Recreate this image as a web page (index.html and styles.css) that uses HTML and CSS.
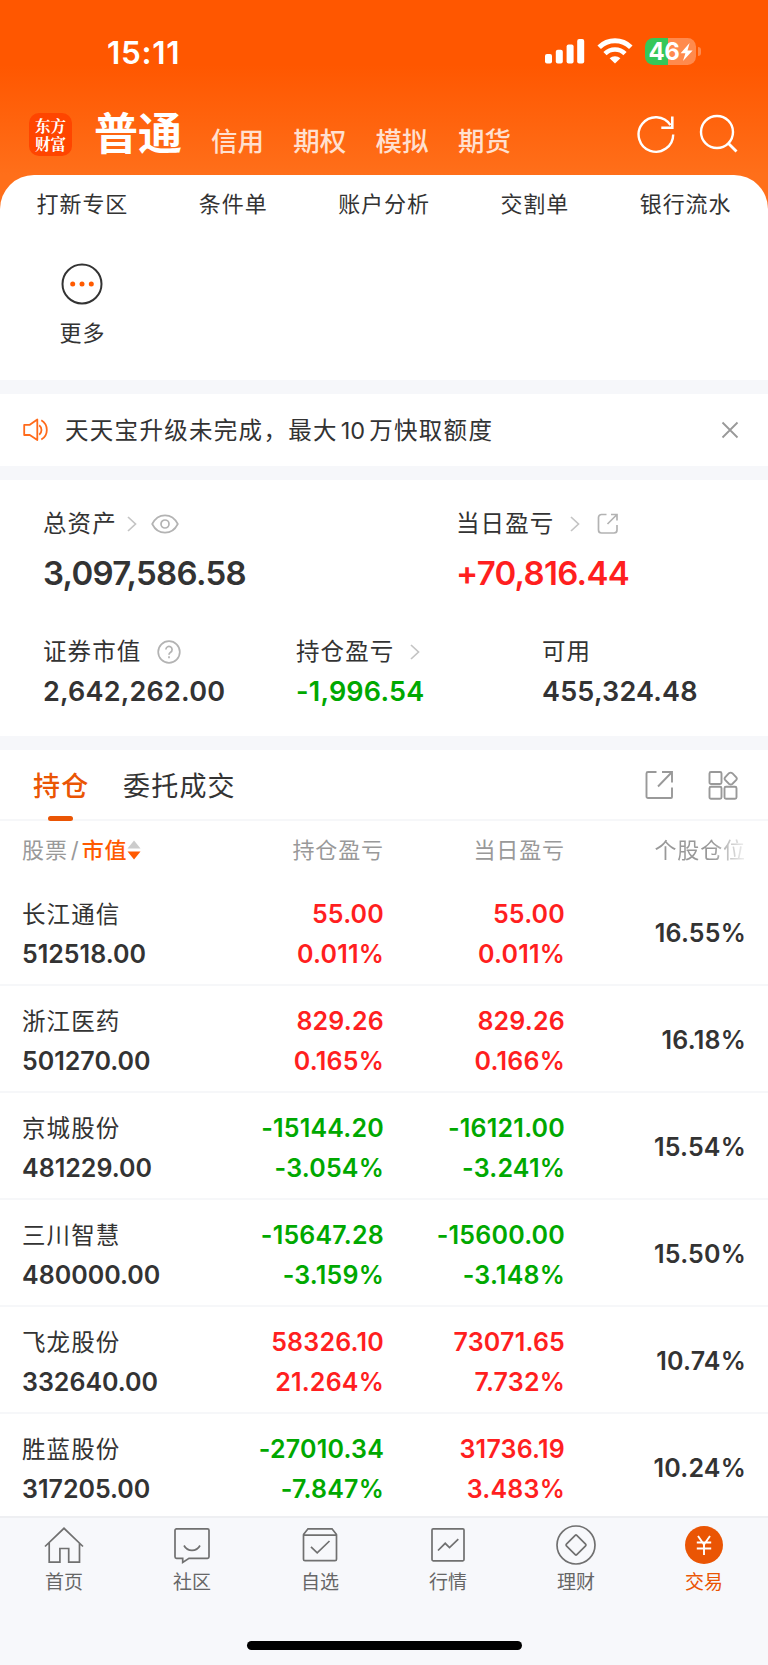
FILE: index.html
```html
<!DOCTYPE html>
<html lang="zh-CN">
<head>
<meta charset="utf-8">
<title>交易</title>
<link rel="stylesheet" href="styles.css">
</head>
<body>
<div class="screen">
  <header class="top">
    <div class="status">
      <span class="time">15:11</span>
      <svg class="signal" width="40" height="25" viewBox="0 0 40 25" fill="#fff"><rect x="0" y="15" width="7" height="9.5" rx="2"/><rect x="10.8" y="10.7" width="7" height="13.8" rx="2"/><rect x="21.6" y="5.6" width="7" height="18.900" rx="2"/><rect x="32.200" y="0" width="7" height="24.500" rx="2"/></svg>
      <svg class="wifi" width="36" height="26" viewBox="0 0 36 26" fill="none" stroke="#fff"><path d="M2.200 9.200a22.500 22.500 0 0 1 31.600 0" stroke-width="5"/><path d="M8 15.600a14.200 14.200 0 0 1 20 0" stroke-width="4.600"/><path d="M12.600 20.300a7.800 7.800 0 0 1 10.800 0L18 25.600z" fill="#fff" stroke="none"/></svg>
      <div class="battery"><span class="level">46</span><svg width="13" height="18" viewBox="0 0 13 18" fill="#fff"><path d="M9.600 0 .6 10.200h4.800L3 18l9.600-10.600H7.500z"/></svg></div>
      <i class="nub"></i>
    </div>
    <div class="nav">
      <div class="logo"><span>东方</span><span>财富</span></div>
      <b class="current">普通</b>
      <span class="alt">信用</span><span class="alt">期权</span><span class="alt">模拟</span><span class="alt">期货</span>
      <svg class="refresh" width="40" height="40" viewBox="0 0 40 40" fill="none" stroke="#fff" stroke-width="2.400"><path d="M37.200 20.500A17.300 17.300 0 1 1 34.500 11.200"/><path d="M36.300 2.500v11.200H25.300" stroke-width="2.600"/></svg>
      <svg class="search" width="40" height="40" viewBox="0 0 40 40" fill="none" stroke="#fff" stroke-width="2.400"><circle cx="18" cy="18" r="16"/><path d="m29 29 8.500 8.500" stroke-width="2.800"/></svg>
    </div>
  </header>

  <section class="shortcuts">
    <span>打新专区</span><span>条件单</span><span>账户分析</span><span>交割单</span><span>银行流水</span>
    <div class="more">
      <svg width="42" height="42" viewBox="0 0 42 42"><circle cx="21" cy="21" r="19.500" fill="none" stroke="#333" stroke-width="2"/><g fill="#ff5a00"><circle cx="11.700" cy="21" r="2.500"/><circle cx="21" cy="21" r="2.500"/><circle cx="30.300" cy="21" r="2.500"/></g></svg>
      <span>更多</span>
    </div>
  </section>

  <section class="notice">
    <svg width="26" height="24" viewBox="0 0 26 24" fill="none" stroke="#ff6a1a" stroke-width="1.800" stroke-linejoin="round"><path d="M1.200 6.800h5.600L14.300 1.500v20.500L6.800 17H1.200z"/><path d="M16.200 7.200a6.200 6.200 0 0 1 0 9.600M18.300 2.200a11.300 11.300 0 0 1 0 19.400"/></svg>
    <p>天天宝升级未完成，最大<em>10</em>万快取额度</p>
    <svg width="18" height="18" viewBox="0 0 18 18" stroke="#999" stroke-width="1.800"><path d="m1.500 1.500 15 15m0-15-15 15"/></svg>
  </section>

  <section class="assets">
    <div class="pair">
      <div class="stat">
        <div class="label">总资产<svg class="chev" width="10" height="16" viewBox="0 0 10 16"><path d="m1 1 7.500 7L1 15"/></svg><svg class="eye" width="28" height="20" viewBox="0 0 28 20"><path d="M1.200 10C7-1.600 21-1.600 26.800 10 21 21.600 7 21.600 1.200 10z"/><circle cx="14" cy="10" r="4"/></svg></div>
        <div class="num big">3,097,586.58</div>
      </div>
      <div class="stat">
        <div class="label">当日盈亏<svg class="chev wide" width="10" height="16" viewBox="0 0 10 16"><path d="m1 1 7.500 7L1 15"/></svg><svg class="out" width="22" height="22" viewBox="0 0 22 22"><path d="M9.500 1.500h-5a3 3 0 0 0-3 3V17a3 3 0 0 0 3 3H17a3 3 0 0 0 3-3v-5M14 1.500h6v6M20 1.500l-9.500 9.500"/></svg></div>
        <div class="num big up">+70,816.44</div>
      </div>
    </div>
    <div class="trio">
      <div class="stat">
        <div class="label">证券市值<svg class="help" width="24" height="24" viewBox="0 0 24 24"><circle cx="12" cy="12" r="10.800"/><path d="M8.900 9.600a3.100 3.100 0 1 1 4.700 2.600c-1.100.7-1.600 1.300-1.600 2.600M12 16.300v1.900"/></svg></div>
        <div class="num mid">2,642,262.00</div>
      </div>
      <div class="stat">
        <div class="label">持仓盈亏<svg class="chev wide" width="10" height="16" viewBox="0 0 10 16"><path d="m1 1 7.500 7L1 15"/></svg></div>
        <div class="num mid down">-1,996.54</div>
      </div>
      <div class="stat">
        <div class="label">可用</div>
        <div class="num mid">455,324.48</div>
      </div>
    </div>
  </section>

  <section class="holdings">
    <div class="tabs">
      <span class="tab on">持仓</span><span class="tab">委托成交</span>
      <svg class="share" width="30" height="30" viewBox="0 0 30 30" fill="none" stroke="#999" stroke-width="1.900"><path d="M12.500 2H4a1.500 1.500 0 0 0-1.500 1.500v23A1.500 1.500 0 0 0 4 28h23a1 1 0 0 0 1-1v-9.500M18 2h10v10.500M28 2 14 16.500"/></svg>
      <svg class="apps" width="30" height="30" viewBox="0 0 30 30" fill="none" stroke="#999" stroke-width="1.900"><rect x="1.500" y="2" width="12" height="12" rx="1.500"/><rect x="1.500" y="16.800" width="12" height="12" rx="1.500"/><rect x="16.500" y="16.800" width="12" height="12" rx="1.500"/><path d="m21 3.200 -3.900 4.200q-1 1.200 0 2.400l4 4.200q1.700 1 3.200 0l4-4.200q1-1.200 0-2.400l-4-4.200q-1.600-1.200-3.300 0z"/></svg>
    </div>
    <div class="row head">
      <span class="first">股票<i>/</i><em>市值</em><svg width="14" height="20" viewBox="0 0 14 20"><path d="M7 .5 13.500 8.500H.5z" fill="#ccc"/><path d="M7 19.500 13.500 11.500H.5z" fill="#ff5a00"/></svg></span>
      <span>持仓盈亏</span><span>当日盈亏</span><span class="fade">个股仓位</span>
    </div>
    <div class="row"><div class="name">长江通信<b>512518.00</b></div><div class="up">55.00<b>0.011%</b></div><div class="up">55.00<b>0.011%</b></div><div class="pct">16.55%</div></div>
    <div class="row"><div class="name">浙江医药<b>501270.00</b></div><div class="up">829.26<b>0.165%</b></div><div class="up">829.26<b>0.166%</b></div><div class="pct">16.18%</div></div>
    <div class="row"><div class="name">京城股份<b>481229.00</b></div><div class="down">-15144.20<b>-3.054%</b></div><div class="down">-16121.00<b>-3.241%</b></div><div class="pct">15.54%</div></div>
    <div class="row"><div class="name">三川智慧<b>480000.00</b></div><div class="down">-15647.28<b>-3.159%</b></div><div class="down">-15600.00<b>-3.148%</b></div><div class="pct">15.50%</div></div>
    <div class="row"><div class="name">飞龙股份<b>332640.00</b></div><div class="up">58326.10<b>21.264%</b></div><div class="up">73071.65<b>7.732%</b></div><div class="pct">10.74%</div></div>
    <div class="row"><div class="name">胜蓝股份<b>317205.00</b></div><div class="down">-27010.34<b>-7.847%</b></div><div class="up">31736.19<b>3.483%</b></div><div class="pct">10.24%</div></div>
  </section>

  <footer class="bar">
    <nav>
      <a><svg width="42" height="42" viewBox="0 0 42 42"><path d="M2 22.500 21 4.300l19 18.200M6.200 19v19.200h10.700V24.500h8.800v13.700h10.800V19"/></svg>首页</a>
      <a><svg width="42" height="42" viewBox="0 0 42 42"><path d="M5.500 4.800h31A1.500 1.500 0 0 1 38 6.300v26.500a1.500 1.500 0 0 1-1.500 1.500H18l-6.300 4.200v-4.200H5.500A1.500 1.500 0 0 1 4 32.800V6.300a1.500 1.500 0 0 1 1.500-1.500zM13 21.500c3.500 6.500 12.500 6.500 16 0"/></svg>社区</a>
      <a><svg width="42" height="42" viewBox="0 0 42 42"><path d="M4.500 10.500 9 4.800h24l4.500 5.700M4.500 11.200h33v24a1.500 1.500 0 0 1-1.500 1.500H6a1.500 1.500 0 0 1-1.500-1.500zM12 22.800l6.200 6L30.500 17"/></svg>自选</a>
      <a><svg width="42" height="42" viewBox="0 0 42 42"><rect x="5" y="4.800" width="32" height="32" rx="1.200"/><path d="m11 26.500 7.200-7.200 4.300 4.300 8.800-8.400"/></svg>行情</a>
      <a><svg width="42" height="42" viewBox="0 0 42 42"><circle cx="21" cy="21" r="19"/><path d="m20.200 11.400-8.800 8.800q-.8.800 0 1.600l8.800 8.800q.8.800 1.600 0l8.800-8.800q.8-.8 0-1.600l-8.800-8.800q-.8-.8-1.600 0z"/></svg>理财</a>
      <a class="on"><svg width="42" height="42" viewBox="0 0 42 42"><circle cx="21" cy="21" r="19" fill="#ea5504" stroke="none"/><path d="m15 12 6 8.500L27 12M13.800 18.500h14.400M13.800 24.500h14.400M21 19.500v11.500" stroke="#fff" stroke-width="1.900"/></svg>交易</a>
    </nav>
    <div class="indicator"></div>
  </footer>
</div>
</body>
</html>
```
FILE: styles.css
```css
* { box-sizing: border-box; }
body { margin: 0; background: #f6f7fa; color: #333; font-family: Inter, "Noto Sans CJK SC", sans-serif; }
i, em { font-style: normal; }
svg { display: block; flex: none; }
.screen { width: 768px; height: 1665px; overflow: hidden; display: flex; flex-direction: column; }

.top { height: 215px; flex: none; background: linear-gradient(#ff5700 65px, #ff6f1a 175px); }
.status { height: 103px; padding: 38px 0 0 107px; display: flex; align-items: flex-start; }
.time { width: 438px; font-size: 31.500px; line-height: 29px; font-weight: 600; color: #fff; letter-spacing: 0.700px; }
.signal { margin-top: 1px; }
.wifi { margin: 0 0 0 12px; }
.battery { width: 51px; height: 27px; margin-left: 12px; border-radius: 8.500px; display: flex; align-items: center; justify-content: center; background: linear-gradient(90deg, #35c759 23px, #ff8a4d 23px); }
.level { color: #fff; font-size: 24px; font-weight: 700; line-height: 27px; letter-spacing: -0.3px; }
.nub { width: 3px; height: 9px; margin: 9px 0 0 2px; border-radius: 0 4px 4px 0; background: #ff8a4d; }
.nav { height: 62px; padding-left: 29px; display: flex; align-items: center; color: #fff; }
.logo { width: 43px; height: 43px; border-radius: 10px; background: #ff4500; display: flex; flex-direction: column; justify-content: center; font: 700 15.500px/18px "Noto Serif CJK SC", "Noto Sans CJK SC", serif; text-align: center; }
.current { width: 117px; margin-left: 22px; font-size: 44px; font-weight: 700; line-height: 60px; }
.alt { width: 82.300px; padding-top: 14px; font-size: 26.500px; line-height: 36px; font-weight: 500; color: #ffe0d0; }
.refresh { margin-left: 96px; }
.search { margin-left: 23px; }

.shortcuts { height: 205px; margin-top: -40px; flex: none; border-radius: 34px 34px 0 0; background: #fff; padding: 14px 6px 0 7px; display: grid; grid-template-columns: repeat(5, 150.800px); grid-template-rows: 73px 1fr; font-size: 22px; line-height: 31px; letter-spacing: 0.9px; text-align: center; }
.more { display: flex; flex-direction: column; align-items: center; gap: 13px; }
.more svg { margin-top: 1px; }

.notice { height: 72px; margin-top: 14px; flex: none; background: #fff; padding: 0 29px 0 23px; display: flex; align-items: center; }
.notice p { flex: 1; margin: 2px 0 0 16px; font-size: 23.500px; letter-spacing: 1.300px; line-height: 34px; }
.notice em { margin: 0 4px 0 3px; letter-spacing: 0; }

.assets { height: 256px; margin-top: 14px; flex: none; background: #fff; padding: 28px 44px 0 43px; }
.pair { height: 128px; display: grid; grid-template-columns: 413px 1fr; }
.trio { display: grid; grid-template-columns: 253px 246px 1fr; }
.label { height: 32px; display: flex; align-items: center; font-size: 23.500px; line-height: 32px; letter-spacing: 1.100px; }
.label svg { fill: none; stroke: #b3b3b3; stroke-width: 1.700; }
.label .chev { margin-left: 10px; stroke: #c4c4c4; }
.label .wide { margin-left: 16px; }
.label .eye { margin-left: 14px; }
.label .out { margin-left: 17px; }
.label .help { margin-left: 16px; }
.num { font-weight: 600; }
.big { font-size: 33px; line-height: 40px; margin-top: 13px; letter-spacing: -0.700px; }
.mid { font-size: 27px; line-height: 34px; margin-top: 7px; letter-spacing: 0.200px; }
.up { color: #ff1f1f; }
.down { color: #00a800; }

.holdings { height: 766px; margin-top: 14px; flex: none; background: #fff; overflow: hidden; }
.tabs { height: 71px; border-bottom: 2px solid #f6f7f9; padding-left: 33px; display: flex; }
.tab { width: 90px; font-size: 27px; line-height: 74px; letter-spacing: 1.200px; }
.tab.on { color: #ea5504; font-weight: 500; position: relative; }
.tab.on::after { content: ""; position: absolute; left: 15px; top: 66px; width: 25px; height: 5px; border-radius: 3px; background: #ea5504; }
.tab:nth-child(2) { width: 521px; }
.share, .apps { margin-top: 20px; }
.apps { margin-left: 34px; }
.row { height: 107.100px; padding: 18px 22px 0 22px; border-bottom: 2px solid #f6f7f9; display: grid; grid-template-columns: 181px 181px 181px 1fr; align-items: start; text-align: right; font-size: 25px; font-weight: 600; line-height: 34px; letter-spacing: 0.200px; }
.row b { display: block; font-weight: 600; margin-top: 6px; }
.row .name { text-align: left; font-weight: 400; font-size: 23.500px; letter-spacing: 1.100px; padding-top: 1px; }
.row .name b { font-size: 25px; letter-spacing: 0; margin-top: 5px; }
.pct { padding-top: 19px; }
.row.head { height: 58px; padding-top: 13px; border: 0; color: #999; font-size: 22px; font-weight: 400; letter-spacing: 0.900px; line-height: 32px; }
.row .first { display: flex; align-items: center; }
.first i { margin: 0 2px 0 3px; }
.first em { color: #ff5a00; font-weight: 500; }
.fade { -webkit-mask-image: linear-gradient(90deg, #000 calc(100% - 34px), rgba(0,0,0,.12)); mask-image: linear-gradient(90deg, #000 calc(100% - 34px), rgba(0,0,0,.12)); }

.bar { height: 149px; flex: none; background: #f7f8fb; border-top: 2px solid #eeeff2; }
.bar nav { height: 123px; display: grid; grid-template-columns: repeat(6, 128px); padding-top: 6px; }
.bar a { display: flex; flex-direction: column; align-items: center; font-size: 19px; line-height: 26px; gap: 4px; color: #666; text-align: center; }
.bar a svg { fill: none; stroke: #707070; stroke-width: 1.700; }
.bar a.on { color: #ea5504; }
.indicator { width: 275px; height: 9px; margin: 0 auto; border-radius: 5px; background: #000; }
```
